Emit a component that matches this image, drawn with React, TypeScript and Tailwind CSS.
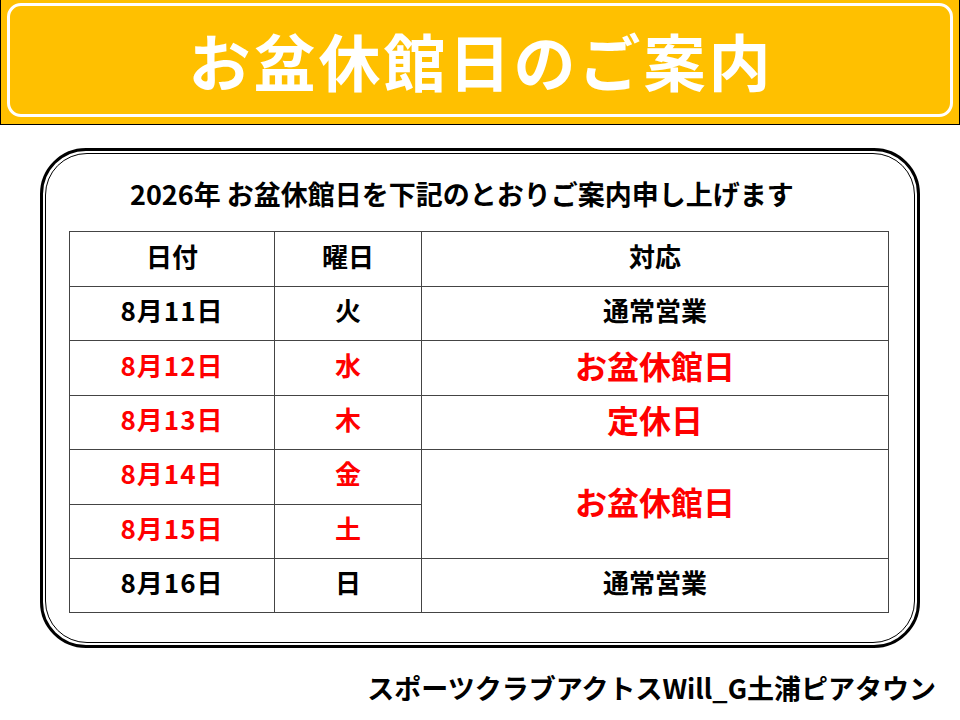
import React from "react";

type Row = {
	date: string;
	day: string;
	note?: string;
	red: boolean;
	span?: number;
	big?: boolean;
};

const rows: Row[] = [
	{ date: "8月11日", day: "火", note: "通常営業", red: false },
	{ date: "8月12日", day: "水", note: "お盆休館日", red: true, big: true },
	{ date: "8月13日", day: "木", note: "定休日", red: true, big: true },
	{ date: "8月14日", day: "金", note: "お盆休館日", red: true, big: true, span: 2 },
	{ date: "8月15日", day: "土", red: true },
	{ date: "8月16日", day: "日", note: "通常営業", red: false },
];

const font = { fontFamily: '"Noto Sans CJK JP", "Noto Sans", sans-serif' };

export default function App() {
	return (
		<div className="w-[960px] h-[720px] bg-white overflow-hidden font-bold text-black" style={font}>
			{/* header band */}
			<div className="h-[125px] bg-[#FFC000] border-l border-r border-b border-black pt-[3px] px-[6px]">
				<div className="h-[114px] rounded-[14px] border-[3px] border-white flex items-center justify-center">
					<h1 className="text-[62px] leading-none text-white tracking-[3px] pl-[2px]">お盆休館日のご案内</h1>
				</div>
			</div>

			{/* framed box */}
			<div className="mt-[23px] ml-[40px] w-[880px] h-[500px] rounded-[46px] border-[3px] border-black p-[2px]">
				<div className="h-full rounded-[42px] border border-black">
					<div className="pt-[22px] pl-[84px] text-[27px] leading-[36px] whitespace-nowrap">
						2026年 お盆休館日を下記のとおりご案内申し上げます
					</div>
					<div className="mt-[19px] ml-[23px]">
						<table className="border-collapse w-[820px] table-fixed">
							<colgroup>
								<col className="w-[205px]" />
								<col className="w-[147px]" />
								<col />
							</colgroup>
							<thead>
								<tr className="h-[55px]">
									<th className="border border-[#444] p-0 pb-[7px] text-[26px] leading-[36px] font-bold">日付</th>
									<th className="border border-[#444] p-0 pb-[7px] text-[26px] leading-[36px] font-bold">曜日</th>
									<th className="border border-[#444] p-0 pb-[7px] text-[26px] leading-[36px] font-bold">対応</th>
								</tr>
							</thead>
							<tbody>
								{rows.map((r) => (
									<tr key={r.date} className="h-[54.4px]">
										<td
											className={`border border-[#444] p-0 pb-[7px] text-center text-[26px] leading-[36px] tracking-[1px] ${r.red ? "text-[#FF0000]" : "text-black"}`}
										>
											{r.date}
										</td>
										<td
											className={`border border-[#444] p-0 pb-[7px] text-center text-[26px] leading-[36px] ${r.red ? "text-[#FF0000]" : "text-black"}`}
										>
											{r.day}
										</td>
										{r.note && (
											<td
												rowSpan={r.span ?? 1}
												className={`border border-[#444] p-0 pb-[7px] text-center leading-[36px] ${
													r.big ? "text-[32px] text-[#FF0000]" : "text-[26px] text-black"
												}`}
											>
												{r.note}
											</td>
										)}
									</tr>
								))}
							</tbody>
						</table>
					</div>
				</div>
			</div>

			{/* footer */}
			<div className="mt-[22px] pr-[24px] text-right text-[27px] leading-[36px] whitespace-nowrap">
				スポーツクラブアクトスWill_G土浦ピアタウン
			</div>
		</div>
	);
}
